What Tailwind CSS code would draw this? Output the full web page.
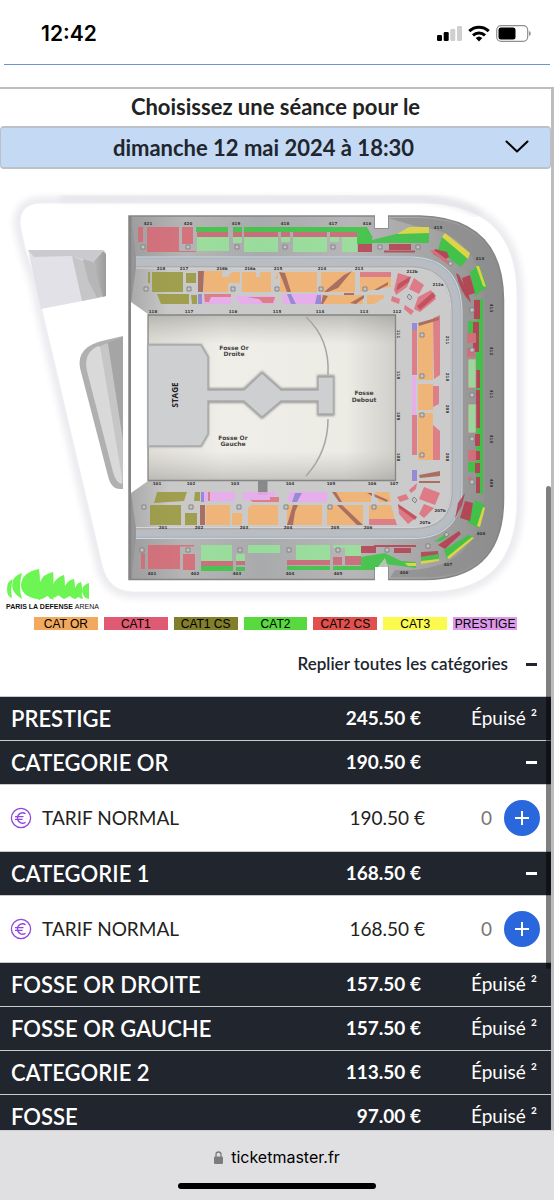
<!DOCTYPE html>
<html lang="fr">
<head>
<meta charset="utf-8">
<meta name="viewport" content="width=device-width, initial-scale=1">
<title>Billetterie – Paris La Défense Arena</title>
<script src="https://cdn.jsdelivr.net/npm/@tailwindcss/browser@4"></script>
</head>
<body class="flex h-screen flex-col overflow-hidden bg-white font-['Lato',sans-serif] text-[#21252d]">

<header class="mx-1 flex h-[65px] shrink-0 items-center justify-between border-b border-[#6f93cf] pt-0.5 pr-[18px] pl-[37px]">
  <time class="pt-0.5 font-['Inter',sans-serif] text-[21px] font-semibold text-black">12:42</time>
  <svg class="h-5 w-24" viewBox="436 23 96 20" role="img" aria-label="Réseau, Wi-Fi, batterie">
    <rect x="437" y="35" width="5" height="6" rx="1.3"/>
    <rect x="443.700" y="32" width="5" height="9" rx="1.3"/>
    <rect x="450.300" y="29" width="5" height="12" rx="1.300" fill="#cfcfcf"/>
    <rect x="457" y="26" width="5" height="15" rx="1.300" fill="#cfcfcf"/>
    <g fill="none" stroke="#000" stroke-width="3">
      <path d="M469.300 31.200a14 14 0 0 1 19.400 0"/>
      <path d="M473 35.300a8.700 8.700 0 0 1 12 0"/>
    </g>
    <path d="M475.700 38.100a4.800 4.800 0 0 1 6.600 0L479 41.500z"/>
    <rect x="496.700" y="25.700" width="31" height="15.600" rx="4.500" fill="none" stroke="#8e8e8e" stroke-width="1.200"/>
    <rect x="498.500" y="27.500" width="17" height="12" rx="2.500"/>
    <path d="M529 31v5c2.300-.8 2.300-4.200 0-5z" fill="#8e8e8e"/>
  </svg>
</header>

<main class="relative mt-[22px] min-h-0 flex-1 overflow-hidden border-t-2 border-r-3 border-[#bdbdbf]">
  <label for="seance" class="block h-[37px] text-center text-[22px] leading-[36px] font-bold text-[#222]">Choisissez une séance pour le</label>
  <div class="relative">
    <select id="seance" class="h-[43px] w-full appearance-none rounded-sm border-x border-y-2 border-[#bcc1c8] bg-[#c4d9f3] pr-6 text-center text-[22px] font-bold text-[#21252d] [text-align-last:center]">
      <option>dimanche 12 mai 2024 à 18:30</option>
    </select>
    <svg class="pointer-events-none absolute top-3.5 right-[22px] h-3.5 w-6" viewBox="0 0 24 14" fill="none" stroke="#000" stroke-width="2" stroke-linecap="round" stroke-linejoin="round"><path d="M1.500 1.500 12 11.500 22.500 1.500"/></svg>
  </div>

  <svg class="block w-full" viewBox="0 169 551 446" role="img" aria-label="Plan de salle Paris La Défense Arena">
    <defs>
      <filter id="soft" x="-10%" y="-10%" width="120%" height="120%"><feGaussianBlur stdDeviation="3"/></filter>
      <filter id="soft2" x="-10%" y="-10%" width="120%" height="120%"><feGaussianBlur stdDeviation="1.200"/></filter>
      <linearGradient id="pit" x1="0" x2="1" y1="0" y2="0"><stop offset="0" stop-color="#dedcd5"/><stop offset=".3" stop-color="#f0eee8"/><stop offset=".8" stop-color="#ecebe4"/><stop offset="1" stop-color="#d0cfc9"/></linearGradient>
      <linearGradient id="pitV" x1="0" x2="0" y1="0" y2="1"><stop offset="0" stop-color="#777" stop-opacity=".4"/><stop offset=".18" stop-color="#999" stop-opacity="0"/><stop offset=".82" stop-color="#999" stop-opacity="0"/><stop offset="1" stop-color="#777" stop-opacity=".35"/></linearGradient>
      <linearGradient id="bowl" x1="0" x2="1" y1="0" y2="0"><stop offset="0" stop-color="#9d9d9e"/><stop offset=".15" stop-color="#b5b5b6"/><stop offset=".35" stop-color="#a9aaac"/><stop offset=".6" stop-color="#b6b6b8"/><stop offset=".8" stop-color="#a5a5a6"/><stop offset="1" stop-color="#8b8b8c"/></linearGradient>
      <linearGradient id="lower" x1="0" x2="1" y1="0" y2="0"><stop offset="0" stop-color="#aaaaab"/><stop offset=".12" stop-color="#c9c9ca"/><stop offset="1" stop-color="#cbcbcc"/></linearGradient>
      <linearGradient id="wedge" x1="0" x2="1" y1="0" y2="0"><stop offset="0" stop-color="#b9b9b9"/><stop offset="1" stop-color="#9c9c9c"/></linearGradient>
      <path id="shell" d="M42 203H425Q517 205 517 295V500Q517 591 430 592H132Q108 591 102 565L42 310L37 285L25 248L20 225Q19 203 42 203Z"/>
      <path id="ring" d="M136 262.500H412Q456 264 456.500 312V490Q456 532 414 533H136"/>
    </defs>

    <!-- Roof and its shadow -->
    <use href="#shell" fill="#e2e2e7" stroke="#ececf0" stroke-width="13" filter="url(#soft)"/>
    <use href="#shell" fill="#fff" stroke="#f0f0f3" stroke-width="1"/>
    <path d="M60 198 400 197Q455 198 480 215" fill="none" stroke="#e2e2e6" stroke-width="5" filter="url(#soft)"/>

    <!-- Outer annexes -->
    <path d="M28 250H103Q106 250 106 254V294Q106 296 103 297L41 309Z" fill="#e2e1e7"/>
    <path d="M28 250H103L93 262 84 260 72 256 34 257Z" fill="#cbcbcf"/>
    <path d="M72 256 84 261 97 298 82 301Z" fill="#c6c6c8"/>
    <path d="M83 259 93 262 104 296 97 298 88 280Z" fill="#b6b6b7"/>
    <path d="M93 262 103 251 106 254V296L103 297Z" fill="url(#wedge)"/>
    <path d="M123 336 106 340Q76 346 80 368L108 476Q111 489 120 489H123Z" fill="#b0b0b1"/>
    <path d="M98 346Q83 353 87 371L113 472Q116 483 122 484V468L103 348Z" fill="#d9d9da"/>
    <path d="M100 346 108 343 123 440V484Z" fill="#c6c6c7"/>
    <path d="M108 343 123 337V440Z" fill="#a5a5a6"/>

    <!-- Upper bowl -->
    <path d="M129 216H375V228H388V216H420Q503 218 503.500 300V500Q503 579 425 579.500H388V567H375V579.500H129Z" fill="url(#bowl)" stroke="#858586" stroke-width="1.500"/>
    <path d="M388 218H420Q501 220 501.500 300V500Q501 577 425 577.500H390L395 570Q484 574 485 490V310Q484 232 415 226Z" fill="#8e8e8f" opacity=".75"/>
    <path d="M129 216H131.500V580H129Z" fill="#858586"/>
    <path d="M131 216 136 257V302H131ZM131 580 136 538V493H131Z" fill="#929293" opacity=".7"/>

    <!-- Lower bowl, walkway ring -->
    <path d="M131 303 136 268H412Q450 270 450.500 312V490Q450 527 414 528H136L131 493Z" fill="url(#lower)"/>
    <use href="#ring" fill="none" stroke="#d3d5d7" stroke-width="12"/>
    <use href="#ring" fill="none" stroke="#adaeb1" stroke-width="10"/>
    <use href="#ring" fill="none" stroke="#b9bdc2" stroke-width="7"/>
    <path d="M136 259H415Q459 262 460 312V490Q459 535 414 537H136" fill="none" stroke="#a9c0d3" stroke-width="1.200"/>
    <path d="M131 302 148 314V481L131 493Z" fill="#fff"/>

    <!-- Pit and stage -->
    <path d="M148 315H395.500V480.500H148Z" fill="url(#pit)"/>
    <path d="M148 315H395.500V480.500H148Z" fill="url(#pitV)" stroke="#858583" stroke-width="1.300"/>
    <path d="M258 480H267.500V495H258Z" fill="#88898a"/>
    <path id="stage" d="M149 345H201L208 357V389H244L262 372 281 389H318V376H333.500V415H318V402H281L262 418 244 402H208V434L201 446H149Z" fill="#888" stroke="#9a9a99" stroke-width="2" filter="url(#soft2)"/>
    <path d="M148 345H201L208 357V390H244L262 373 281 390H318V377H333.500V414H318V401H281L262 417 244 401H208V434L201 446H148Z" fill="#cecfd0" stroke="#aaabac" stroke-width="1.500"/>
    <path d="M306 317Q330 339 328 375M328 419Q328 452 306 476" fill="none" stroke="#a5a5a2" stroke-width="1.500"/>

    <!-- Upper tier, straight sections -->
    <g opacity=".8">
      <g fill="#dc6470">
        <path d="M138 227h5v15h-5zM147 227h32v25h-32zM182 227h11v17h-11zM176 251h20v1h-20z"/>
        <path d="M141 553h4v16h-4zM148 545h32v24h-32zM183 554h12v16h-12zM148 545h46v1.500h-46z"/>
      </g>
      <g fill="#32c83a">
        <path d="M196 227h32v5h-32zM233 227h9v5h-9zM244 227h114v5H244zM357 227h10l6 11h-1v6h-15z"/>
        <path d="M372 240 400 233H429V243H372zM201 566h32v5h-32zM236 567h9v4h-9zM287 566h43v4h-43zM333 566h28v4h-28zM361 557l24-4 16 8 15 1v6l-31-4-4 6h-20z"/>
        <path d="M421 557 439 553V559L421 562Z"/>
      </g>
      <g fill="#cf6170">
        <path d="M197 232h31v5h-31zM233 232h9v5h-9zM244 232h34v5h-34zM281 232h9v5h-9zM293 232h34v5h-34zM330 232h27v5h-27zM201 561h32v5h-32zM236 561h9v4h-9zM287 560h43v5h-43zM333 557h9v8h-9zM345 555h16v10h-16z"/>
      </g>
      <g fill="#96e898">
        <path d="M197 237h32v14h-32zM233 237h9v6h-9zM244 237h34v15h-34zM281 237h9v5h-9zM293 237h34v15h-34zM330 237h9v5h-9zM342 237h15v15h-15zM201 545h31v16h-31zM236 554h9v7h-9zM248 545h32v8h-32zM296 545h34v15h-34zM345 545h16v11h-16zM333 545h28v3h-28z"/>
      </g>
      <g fill="#b73a4b">
        <path d="M358 244h14v8h-14zM389 244h22v6h-22zM384 250.500h31v2h-31zM361 546h15v7h-15zM374 545h42v2h-42zM394 548h17v5h-17zM421 552l17-1v3l-17 3z"/>
      </g>
      <g fill="#e9df38"><path d="M397 234 409 227H429V233ZM405 563h11v3h-8zM421 561l18-2v2l-18 3z"/></g>
    </g>
    <path d="M378 224h9v-8h-9zM377 568 385 558 388 567V580H375z" fill="#c9c9ca" opacity=".8"/>
    <path d="M375 214h13v14h-13zM375 567h13v15h-13z" fill="#fff"/>

    <!-- Upper tier, corners and end stand -->
    <g opacity=".85">
      <path d="M442 236 468 258 461 267 438 250Z" fill="#35c83d"/>
      <path d="M445 233 470 253 468 259 442 237Z" fill="#e9df38"/>
      <path d="M435 249 447 252 449 257 444 260 433 254Z" fill="#b73a4b"/>
      <path d="M430 251 447 264 450 262 434 250Z" fill="#d96a75"/>
      <path d="M470 272 479 265 487 287 475 296Z" fill="#35c83d"/>
      <path d="M476 266H479L486 287 483 286Z" fill="#e9df38"/>
      <path d="M462 278 470 275 475 293 466 296Z" fill="#b73a4b"/>
      <path d="M456 273Q460 292 471 303L469 296 459 275Z" fill="#b73a4b"/>
      <path d="M476 299h7v195h-7zM468 321h7v13h-7zM468 462h8v10h-8z" fill="#35c83d"/>
      <path d="M474 300h6v19h-6zM473 322h6v30h-6zM476 370h4v18h-4zM476 390h4v38h-4zM475 434h5v12h-5zM475 451h5v9h-5zM475 463h5v10h-5zM476 477h4v16h-4z" fill="#b73a4b"/>
      <path d="M467 333h9v10h-9zM467 348h8v9h-8zM468 450h8v11h-8zM467 480l4-5v5z" fill="#d96a75"/>
      <path d="M468 359h8v29h-8zM468 404h8v29h-8z" fill="#9fe0a1" stroke="#c97d7d" stroke-width=".7"/>
      <path d="M475 500 485 505 478 528 467 522Z" fill="#35c83d"/>
      <path d="M483 507 485 508 480 527 477 526Z" fill="#e9df38"/>
      <path d="M465 501 473 503 470 521 460 518Z" fill="#b73a4b"/>
      <path d="M465 493 458 503 455 519 462 505Z" fill="#b73a4b"/>
      <path d="M444 550 468 535 474 537 447 559Z" fill="#35c83d"/>
      <path d="M447 557 472 537 474 538 449 559Z" fill="#e9df38"/>
      <path d="M438 545 459 531 461 534 445 549Z" fill="#b73a4b"/>
      <path d="M434 542 447 533 449 536 441 541Z" fill="#35c83d"/>
    </g>

    <!-- Lower tier, straight sections -->
    <g opacity=".85">
      <g fill="#99973a">
        <path d="M148 272h2v11h-2zM152 272h31v20h-31zM186 273h10v10h-10zM157 294h32v10h-28zM191 295h6v9h-5zM157 492h30l-3 9-30 2zM195 492h5v9h-6zM150 505h31v20h-31zM185 513h12v12h-12z"/>
      </g>
      <g fill="#f6b26a">
        <path d="M204 271h18v6h6v15h-24zM228 283V277L232 272h8v11zM242 272h14v5h4v-5h11v20h-29zM275 279l3-7v7zM280 272h37v20h-37zM321 272h34v20h-34zM360 277h31v10l-31 5zM322 295h41v9h-41zM367 295h17v3l-10 6h-7z"/>
        <path d="M206 505h24v20h-24zM232 513h10v12h-10zM248 508l4-3h26v20h-30zM287 505h35v20h-35zM327 505h36v20h-36zM369 505h22l4 14h-26zM332 492h39v10h-30zM375 492h14l2 10h-12z"/>
        <path d="M418 325 433 320V380H418zM418 384h15v26h-15zM418 413h15v47h-15z"/>
      </g>
      <g fill="#ecaaf0">
        <path d="M204 294h27v10h-27zM235 296h40v8h-35zM282 294h40v10h-38zM204 492h31v9h-31zM243 492h32v8h-32zM290 492h37v10h-40zM412 376h4v43h-4z"/>
      </g>
      <g fill="#e0727d">
        <path d="M204 294h27v3h-20l-2 5h-4zM247 297h28l-2 6h-10l-4-4zM360 272h31v5h-31zM250 500h26l-2 2h-21zM270 497h9v5h-9zM208 492h2v9h-2zM369 519h26l2 6h-28zM412 328h5v47h-5zM433 318l7-3v60l-6 4zM433 386h6v18l-6 3zM433 425l7 6v29h-7zM412 415h5v40h-5z"/>
      </g>
      <g fill="#8d80d8"><path d="M198 294h4v10h-4zM287 294h4l5 10h-5zM317 295h4v9h-6zM201 492h3v10h-3zM295 493h7l-5 9h-5zM412 323h5v7h-5zM412 470h5v11h-5z"/></g>
      <g fill="#a6604f">
        <path d="M198 271h6l-1 21h-5zM279 272l6 1 6 19h-4l-5-13zM344 275l8-4-14 17-10 4h-4zM374 290l14-8v3l-10 5zM323 295l5 1-5 8h-2zM350 303l14-8v3l-8 6zM344 293h10v2h-10zM200 505h5v20h-5zM287 525l6-20h5l-3 7-2 13zM337 505h5l21 20h-6zM332 492h4l6 10h-3zM367 493h5v3zM374 494l14 6-1 2-12-5zM418 323l21-6v3l-20 6zM419 475l21-4v5l-20 2zM419 481h21v2h-21z"/>
      </g>
    </g>
    <!-- Lower tier, corners -->
    <g fill="#de7783" opacity=".95">
      <path d="M398 273 411 277 407 287 396 295 394 290Z"/>
      <path d="M414 278 424 285 419 294 409 289Z"/>
      <path d="M418 297 431 290 436 299 420 312 414 309Z"/>
      <path d="M392 296 400 299 399 304 391 301ZM405 305 414 311 411 315 404 309Z"/>
      <path d="M398 504 417 517 408 524 399 514ZM397 497 406 494 409 499 400 502ZM409 490 417 483 416 489 411 493Z"/>
      <path d="M424 487 440 493 435 505 419 499ZM424 504 434 508 424 518 419 514Z"/>
    </g>
    <path d="M398 284 411 276 409 282 396 291ZM417 306 433 292 436 296 420 310ZM398 504 417 517 415 520 399 508Z" fill="#b6454f" opacity=".7"/>

    <!-- Stairwells -->
    <g fill="#c4c4c4" stroke="#858585" stroke-width="1">
      <path d="M141 245h4v4h-4zM186 245h4v4h-4zM235 245h4v4h-4zM283 245h4v4h-4zM331 245h4v4h-4zM378 245h4v4h-4zM416 245h4v4h-4z"/>
      <path d="M144 287h4v4h-4zM187 287h4v4h-4zM231 287h4v4h-4zM275 287h4v4h-4zM319 287h4v4h-4zM363 287h4v4h-4z"/>
      <path d="M142 505h4v4h-4zM189 505h4v4h-4zM237 505h4v4h-4zM284 505h4v4h-4zM328 505h4v4h-4zM372 505h4v4h-4z"/>
      <path d="M140 548h4v4h-4zM186 548h4v4h-4zM238 548h4v4h-4zM287 548h4v4h-4zM336 548h4v4h-4zM385 548h4v4h-4zM426 544h4v4h-4z"/>
      <path d="M420 333h4v4h-4zM420 374h4v4h-4zM420 413h4v4h-4zM420 453h4v4h-4zM470 308h4v4h-4zM470 348h4v4h-4zM470 393h4v4h-4zM470 437h4v4h-4zM470 480h4v4h-4z"/>
      <path d="M409 294l3 3-2 3-3-3zM414 497l3 3-2 3-3-3zM450 261l3 2-2 3-3-2zM446 532l3 2-2 3-3-2z"/>
    </g>

    <!-- Section numbers -->
    <g class="font-['DejaVu_Sans',sans-serif] text-[4px] font-bold" fill="#333" text-anchor="middle">
      <text x="148" y="225">421</text><text x="188" y="225">420</text><text x="236" y="225">419</text><text x="285" y="225">418</text><text x="333" y="225">417</text><text x="367" y="225">416</text><text x="438" y="229">415</text><text x="480" y="260">414</text>
      <text x="161" y="270">218</text><text x="184" y="270">217</text><text x="222" y="270">216b</text><text x="250" y="270">216a</text><text x="278" y="270">215</text><text x="322" y="270">214</text><text x="359" y="270">213</text><text x="412" y="273">212b</text><text x="438" y="286">212a</text>
      <text x="153" y="313">118</text><text x="189" y="313">117</text><text x="233" y="313">116</text><text x="277" y="313">115</text><text x="320" y="313">114</text><text x="364" y="313">113</text><text x="397" y="313">112</text>
      <text x="157" y="485">101</text><text x="191" y="485">102</text><text x="235" y="485">103</text><text x="290" y="485">104</text><text x="331" y="485">105</text><text x="372" y="485">106</text><text x="394" y="485">107</text>
      <text x="163" y="529">201</text><text x="199" y="529">202</text><text x="244" y="529">203</text><text x="288" y="529">204</text><text x="335" y="529">205</text><text x="368" y="529">206</text><text x="425" y="524">207a</text><text x="440" y="512">207b</text>
      <text x="152" y="575">401</text><text x="195" y="575">402</text><text x="237" y="575">403</text><text x="290" y="575">404</text><text x="338" y="575">405</text><text x="404" y="574">406</text><text x="448" y="566">407</text><text x="481" y="535">408</text>
      <g transform="rotate(90 398 334)"><text x="398" y="335">111</text><text x="439" y="335">110</text><text x="480" y="335">109</text><text x="521" y="335">108</text></g>
      <g transform="rotate(90 447 340)"><text x="447" y="341">211</text><text x="484" y="341">210</text><text x="516" y="341">209</text><text x="564" y="341">208</text></g>
      <g transform="rotate(90 491 308)"><text x="491" y="309">413</text><text x="534" y="309">412</text><text x="577" y="309">411</text><text x="622" y="309">410</text><text x="666" y="309">409</text></g>
    </g>
    <g class="font-['DejaVu_Sans',sans-serif] text-[6px] font-bold" fill="#444" text-anchor="middle">
      <text x="234" y="350">Fosse Or</text><text x="234" y="356">Droite</text>
      <text x="233" y="440">Fosse Or</text><text x="233" y="446">Gauche</text>
      <text x="364" y="395">Fosse</text><text x="364" y="402">Debout</text>
    </g>
    <text class="font-['Open_Sans',sans-serif] text-[8px] font-bold" fill="#222" text-anchor="middle" transform="translate(178 395) rotate(-90)">STAGE</text>

    <!-- Venue logo -->
    <g fill="#6cf553">
      <path d="M13 579Q7 581 7 589T12 598Q10 588 13 579Z"/>
      <path d="M22 573Q12 576 12 586 13 594 22 599Q18 587 22 573Z"/>
      <path d="M39 569Q22 572 21 585 21 596 37 599Q41 591 39 569Z"/>
      <path d="M39 569Q31 579 32 590 34 597 39 600 52 596 53 586 54 577 53 572 43 574 40 582Z"/>
      <path d="M53 572Q44 577 43 587 45 597 54 600 49 591 50 583Z"/>
      <path d="M53 572Q45 584 50 599 62 596 64 587 65 580 64 575 57 577 53 584Z"/>
      <path d="M64 575Q56 580 56 588 57 596 64 599 73 596 74 589 75 583 74 579 68 580 65 586Z"/>
      <path d="M74 579Q67 582 67 589 68 597 75 599 80 597 82 592 82 586 81 582 77 583 75 588Z"/>
      <path d="M81 582Q76 585 76 591 77 598 83 599 81 594 82 589ZM89 583Q82 585 82 591 83 598 89 599Z"/>
    </g>
    <text class="font-['Liberation_Sans_Narrow','Liberation_Sans',sans-serif] text-[7px] font-bold" x="6" y="609" fill="#111">PARIS LA DEFENSE <tspan font-weight="400">ARENA</tspan></text>
  </svg>

  <ul class="mt-0.5 flex h-[15px] gap-1.5 px-[34px] text-center font-['Liberation_Sans',sans-serif] text-xs leading-[14px] text-black">
    <li class="h-[13px] flex-1 bg-[#f2a95d]">CAT OR</li>
    <li class="h-[13px] flex-1 bg-[#df5a72]">CAT1</li>
    <li class="h-[13px] flex-1 bg-[#827f2b]">CAT1 CS</li>
    <li class="h-[13px] flex-1 bg-[#57d93f]">CAT2</li>
    <li class="h-[13px] flex-1 bg-[#e2504d]">CAT2 CS</li>
    <li class="h-[13px] flex-1 bg-[#fbfa4f]">CAT3</li>
    <li class="h-[13px] flex-1 bg-[#dd98e9]">PRESTIGE</li>
  </ul>

  <div class="flex h-16 items-center justify-end pr-3.5">
    <button type="button" class="flex items-center gap-[18px] text-[17px] font-semibold">Replier toutes les catégories<span class="h-[3px] w-[11px] bg-[#21252d]"></span></button>
  </div>

  <table class="w-full border-collapse border-t border-[#c9cacc] text-left text-[19px]">
    <colgroup><col><col class="w-[120px]"><col class="w-[130px]"></colgroup>
    <tbody>
      <tr class="h-11 border-b border-[#c9cacc] bg-[#21252d] text-white"><th scope="row" class="pl-[11px] text-[22px] font-semibold">PRESTIGE</th><td class="text-right font-bold">245.50 €</td><td class="pr-3.5 text-right">Épuisé ²</td></tr>
      <tr class="h-11 border-b border-[#c9cacc] bg-[#21252d] text-white"><th scope="row" class="pl-[11px] text-[22px] font-semibold">CATEGORIE OR</th><td class="text-right font-bold">190.50 €</td><td class="pr-3.5"><button type="button" aria-label="Replier CATEGORIE OR" class="ml-auto flex h-6 items-center"><span class="h-[3px] w-[11px] bg-white"></span></button></td></tr>
      <tr class="h-[67px] border-b border-[#c9cacc] text-[#222]"><th scope="row" class="pl-2.5 font-normal"><span class="flex items-center gap-2.5"><svg class="size-[22px]" viewBox="0 0 22 22" fill="none" stroke="#8f45e0" stroke-width="1.300"><circle cx="11" cy="11" r="9.600"/><path d="M15.500 6.800A5 5 0 0 0 7.500 11a5 5 0 0 0 8 4.200M5 9.700h8.500M5 12.300h7.500"/></svg>TARIF NORMAL</span></th><td class="text-right"><span class="-mr-1">190.50 €</span></td><td class="pr-[11px]"><span class="flex items-center justify-end gap-3"><output class="text-[#777]">0</output><button type="button" aria-label="Ajouter un billet CATEGORIE OR" class="flex size-9 items-center justify-center rounded-full bg-[#2a66dc]"><svg class="size-3.5" viewBox="0 0 14 14" stroke="#fff" stroke-width="2"><path d="M7 0v14M0 7h14"/></svg></button></span></td></tr>
      <tr class="h-11 border-b border-[#c9cacc] bg-[#21252d] text-white"><th scope="row" class="pl-[11px] text-[22px] font-semibold">CATEGORIE 1</th><td class="text-right font-bold">168.50 €</td><td class="pr-3.5"><button type="button" aria-label="Replier CATEGORIE 1" class="ml-auto flex h-6 items-center"><span class="h-[3px] w-[11px] bg-white"></span></button></td></tr>
      <tr class="h-[67px] border-b border-[#c9cacc] text-[#222]"><th scope="row" class="pl-2.5 font-normal"><span class="flex items-center gap-2.5"><svg class="size-[22px]" viewBox="0 0 22 22" fill="none" stroke="#8f45e0" stroke-width="1.300"><circle cx="11" cy="11" r="9.600"/><path d="M15.500 6.800A5 5 0 0 0 7.500 11a5 5 0 0 0 8 4.200M5 9.700h8.500M5 12.300h7.500"/></svg>TARIF NORMAL</span></th><td class="text-right"><span class="-mr-1">168.50 €</span></td><td class="pr-[11px]"><span class="flex items-center justify-end gap-3"><output class="text-[#777]">0</output><button type="button" aria-label="Ajouter un billet CATEGORIE 1" class="flex size-9 items-center justify-center rounded-full bg-[#2a66dc]"><svg class="size-3.5" viewBox="0 0 14 14" stroke="#fff" stroke-width="2"><path d="M7 0v14M0 7h14"/></svg></button></span></td></tr>
      <tr class="h-11 border-b border-[#c9cacc] bg-[#21252d] text-white"><th scope="row" class="pl-[11px] text-[22px] font-semibold">FOSSE OR DROITE</th><td class="text-right font-bold">157.50 €</td><td class="pr-3.5 text-right">Épuisé ²</td></tr>
      <tr class="h-11 border-b border-[#c9cacc] bg-[#21252d] text-white"><th scope="row" class="pl-[11px] text-[22px] font-semibold">FOSSE OR GAUCHE</th><td class="text-right font-bold">157.50 €</td><td class="pr-3.5 text-right">Épuisé ²</td></tr>
      <tr class="h-11 border-b border-[#c9cacc] bg-[#21252d] text-white"><th scope="row" class="pl-[11px] text-[22px] font-semibold">CATEGORIE 2</th><td class="text-right font-bold">113.50 €</td><td class="pr-3.5 text-right">Épuisé ²</td></tr>
      <tr class="h-11 border-b border-[#c9cacc] bg-[#21252d] text-white"><th scope="row" class="pl-[11px] text-[22px] font-semibold">FOSSE</th><td class="text-right font-bold">97.00 €</td><td class="pr-3.5 text-right">Épuisé ²</td></tr>
    </tbody>
  </table>

  <div class="absolute top-[397px] right-0 h-[483px] w-[5px] rounded-full bg-black/50"></div>
</main>

<footer class="flex h-[70px] shrink-0 flex-col items-center justify-between border-t border-[#cfcfd1] bg-[#e0e0e2] pt-3 pb-[11px] font-['Inter',sans-serif] text-black">
  <a href="https://ticketmaster.fr" class="flex items-center gap-2 text-base leading-7">
    <svg class="h-[13px] w-[9px]" viewBox="0 0 9 13"><path d="M2 6V3.500a2.500 2.500 0 0 1 5 0V6" fill="none" stroke="#7c7c7e" stroke-width="1.300"/><rect y="5.500" width="9" height="7.500" rx="1.200" fill="#7c7c7e"/></svg>ticketmaster.fr
  </a>
  <div class="h-1.5 w-[198px] rounded-full bg-black"></div>
</footer>
</body>
</html>
